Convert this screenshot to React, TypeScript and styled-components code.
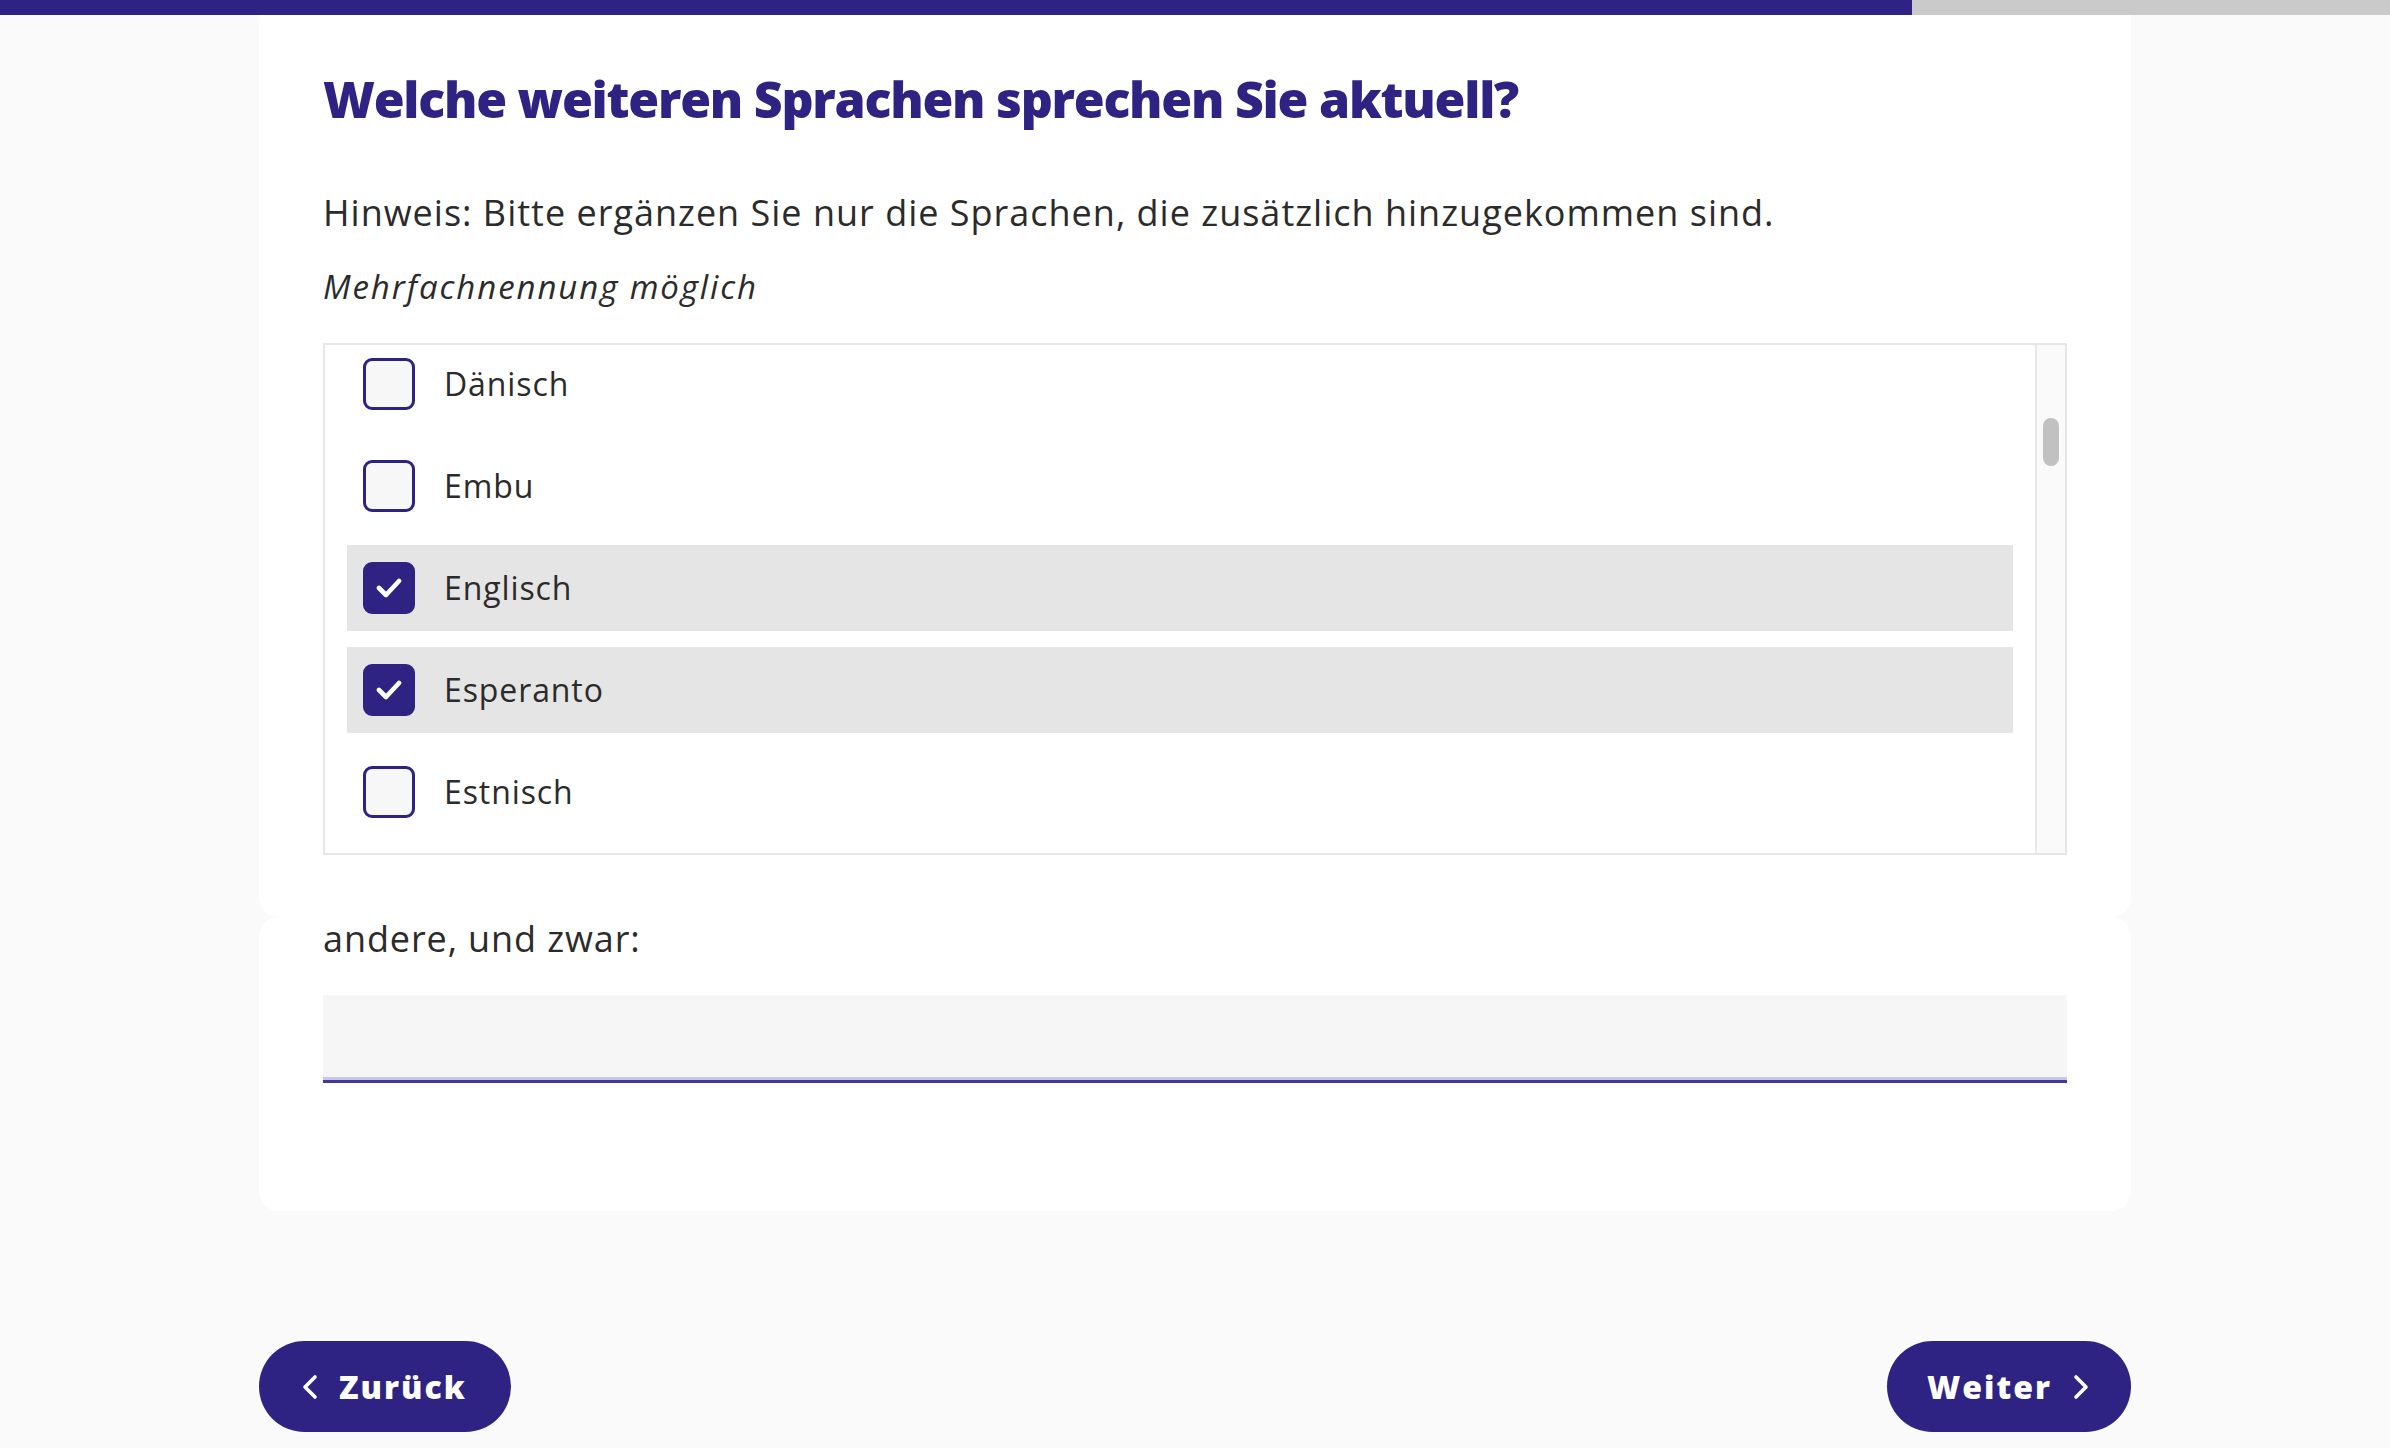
import React, { useLayoutEffect, useRef, useState } from "react";
import styled, { createGlobalStyle } from "styled-components";

const PURPLE = "#2e2382";
const TEXT = "#2b2b2b";
const FONT = `"Open Sans", "Noto Sans", Arial, sans-serif`;

const GlobalStyle = createGlobalStyle`
  html, body { margin: 0; padding: 0; background: #fafafa; }
  body { font-family: ${FONT}; color: ${TEXT}; }
  *, *::before, *::after { box-sizing: border-box; }
`;

const Page = styled.div`
  min-height: 1448px;
  display: flex;
  flex-direction: column;
`;

const ProgressTrack = styled.div`
  height: 15px;
  background: #cacaca;
  display: flex;
`;

const ProgressFill = styled.div`
  height: 100%;
  background: ${PURPLE};
`;

const Main = styled.main`
  width: 1872px;
  margin: 0 auto;
  display: flex;
  flex-direction: column;
`;

const Card = styled.section<{ $radius: string; $pad: string }>`
  background: #ffffff;
  border-radius: ${(p) => p.$radius};
  padding: ${(p) => p.$pad};
  display: flex;
  flex-direction: column;
`;

const Title = styled.h1`
  margin: 0;
  font-size: 50px;
  line-height: 65px;
  font-weight: 800;
  color: ${PURPLE};
  letter-spacing: -1.25px;
`;

const Hint = styled.p`
  margin: 54px 0 0;
  font-size: 36px;
  line-height: 54px;
  font-weight: 400;
  letter-spacing: 1px;
`;

const Multi = styled.p`
  margin: 24px 0 0;
  font-size: 33px;
  line-height: 46px;
  font-style: italic;
  letter-spacing: 1.9px;
`;

const ListBox = styled.div`
  margin-top: 33px;
  height: 512px;
  border: 2px solid #e6e6e6;
  background: #ffffff;
  display: flex;
`;

const Scroller = styled.div`
  flex: 1;
  height: 100%;
  overflow-y: scroll;
  scrollbar-width: none;
  padding: 0 22px;
  display: flex;
  flex-direction: column;
  gap: 16px;
  &::-webkit-scrollbar {
    display: none;
  }
`;

const Rail = styled.div`
  position: relative;
  flex: 0 0 30px;
  background: #fafafa;
  border-left: 2px solid #e8e8e8;
`;

const Thumb = styled.div`
  position: absolute;
  left: 6px;
  width: 16px;
  border-radius: 8px;
  background: #c1c1c1;
`;

const Row = styled.label<{ $checked: boolean }>`
  flex: 0 0 86px;
  display: flex;
  align-items: center;
  gap: 29px;
  padding-left: 16px;
  background: ${(p) => (p.$checked ? "#e5e5e5" : "transparent")};
  font-size: 32px;
  line-height: 40px;
  letter-spacing: 0.9px;
  color: ${TEXT};
  cursor: pointer;
`;

const Box = styled.span<{ $checked: boolean }>`
  flex: 0 0 52px;
  width: 52px;
  height: 52px;
  border-radius: 9px;
  border: 3px solid ${PURPLE};
  background: ${(p) => (p.$checked ? PURPLE : "#f7f7f7")};
  display: flex;
  align-items: center;
  justify-content: center;
`;

const HiddenInput = styled.input`
  position: absolute;
  opacity: 0;
  width: 0;
  height: 0;
`;

const Label = styled.label`
  display: block;
  font-size: 36px;
  line-height: 44px;
  letter-spacing: 0.9px;
`;

const TextInput = styled.input`
  margin-top: 34px;
  width: 100%;
  height: 88px;
  border: none;
  border-bottom: 3px solid #4038a0;
  box-shadow: inset 0 -4px 0 -1px #c9c6e3;
  background: #f6f6f6;
  font-family: ${FONT};
  font-size: 32px;
  padding: 0 20px;
  outline: none;
  color: ${TEXT};
`;

const Nav = styled.nav`
  margin-top: 130px;
  display: flex;
  justify-content: space-between;
`;

const NavButton = styled.button<{ $padL: number; $padR: number }>`
  height: 91px;
  border: none;
  border-radius: 46px;
  background: ${PURPLE};
  color: #ffffff;
  display: inline-flex;
  align-items: center;
  gap: 20px;
  padding: 0 ${(p) => p.$padR}px 0 ${(p) => p.$padL}px;
  font-family: ${FONT};
  font-size: 32px;
  font-weight: 800;
  letter-spacing: 2px;
  cursor: pointer;
`;

const Chevron = ({ dir }: { dir: "left" | "right" }) => (
  <svg width="18" height="26" viewBox="0 0 18 26" fill="none">
    <polyline
      points={dir === "left" ? "14,3 4,13 14,23" : "4,3 14,13 4,23"}
      stroke="#ffffff"
      strokeWidth="3.6"
      strokeLinecap="round"
      strokeLinejoin="round"
    />
  </svg>
);

const Check = () => (
  <svg width="26" height="22" viewBox="0 0 26 22" fill="none">
    <polyline
      points="3,11 10,18 23,4"
      stroke="#ffffff"
      strokeWidth="4.6"
      strokeLinecap="round"
      strokeLinejoin="round"
    />
  </svg>
);

const LANGUAGES = [
  "Afrikaans", "Albanisch", "Arabisch", "Armenisch", "Bengalisch", "Bosnisch",
  "Bulgarisch", "Chinesisch", "Dänisch", "Embu", "Englisch", "Esperanto",
  "Estnisch", "Finnisch", "Französisch", "Georgisch", "Griechisch", "Hebräisch",
  "Hindi", "Indonesisch", "Isländisch", "Italienisch", "Japanisch", "Kasachisch",
  "Koreanisch", "Kroatisch", "Kurdisch", "Lettisch", "Litauisch", "Mazedonisch",
  "Mongolisch", "Niederländisch", "Norwegisch", "Paschtu", "Persisch", "Polnisch",
  "Portugiesisch", "Rumänisch", "Russisch", "Schwedisch", "Serbisch", "Slowakisch",
  "Slowenisch", "Spanisch", "Swahili", "Tamil", "Thai", "Tschechisch", "Türkisch",
  "Ukrainisch", "Ungarisch", "Urdu", "Vietnamesisch",
];

type ThumbGeom = { top: number; height: number };

export default function App() {
  const [selected, setSelected] = useState<string[]>(["Englisch", "Esperanto"]);
  const [thumb, setThumb] = useState<ThumbGeom>({ top: 73, height: 48 });
  const scrollRef = useRef<HTMLDivElement>(null);
  const progress = 80;

  const measure = () => {
    const el = scrollRef.current;
    if (!el) return;
    const rail = el.clientHeight;
    const height = Math.max(30, (rail * el.clientHeight) / el.scrollHeight);
    const max = el.scrollHeight - el.clientHeight;
    const top = max > 0 ? (el.scrollTop / max) * (rail - height) - 4 : 0;
    setThumb({ top: Math.max(0, top), height });
  };

  useLayoutEffect(() => {
    if (scrollRef.current) scrollRef.current.scrollTop = 820;
    measure();
  }, []);

  const toggle = (lang: string) =>
    setSelected((s) => (s.includes(lang) ? s.filter((l) => l !== lang) : [...s, lang]));

  return (
    <Page>
      <GlobalStyle />
      <ProgressTrack>
        <ProgressFill style={{ width: `${progress}%` }} />
      </ProgressTrack>
      <Main>
        <Card $radius="0 0 20px 20px" $pad="52px 64px 62px">
          <Title>Welche weiteren Sprachen sprechen Sie aktuell?</Title>
          <Hint>Hinweis: Bitte ergänzen Sie nur die Sprachen, die zusätzlich hinzugekommen sind.</Hint>
          <Multi>Mehrfachnennung möglich</Multi>
          <ListBox>
            <Scroller ref={scrollRef} onScroll={measure}>
              {LANGUAGES.map((lang) => {
                const checked = selected.includes(lang);
                return (
                  <Row key={lang} $checked={checked}>
                    <HiddenInput type="checkbox" checked={checked} onChange={() => toggle(lang)} />
                    <Box $checked={checked}>{checked && <Check />}</Box>
                    {lang}
                  </Row>
                );
              })}
            </Scroller>
            <Rail>
              <Thumb style={{ top: thumb.top, height: thumb.height }} />
            </Rail>
          </ListBox>
        </Card>
        <Card $radius="20px" $pad="0 64px 128px">
          <Label htmlFor="other">andere, und zwar:</Label>
          <TextInput id="other" type="text" />
        </Card>
        <Nav>
          <NavButton $padL={42} $padR={44}>
            <Chevron dir="left" />
            Zurück
          </NavButton>
          <NavButton $padL={40} $padR={41}>
            Weiter
            <Chevron dir="right" />
          </NavButton>
        </Nav>
      </Main>
    </Page>
  );
}
